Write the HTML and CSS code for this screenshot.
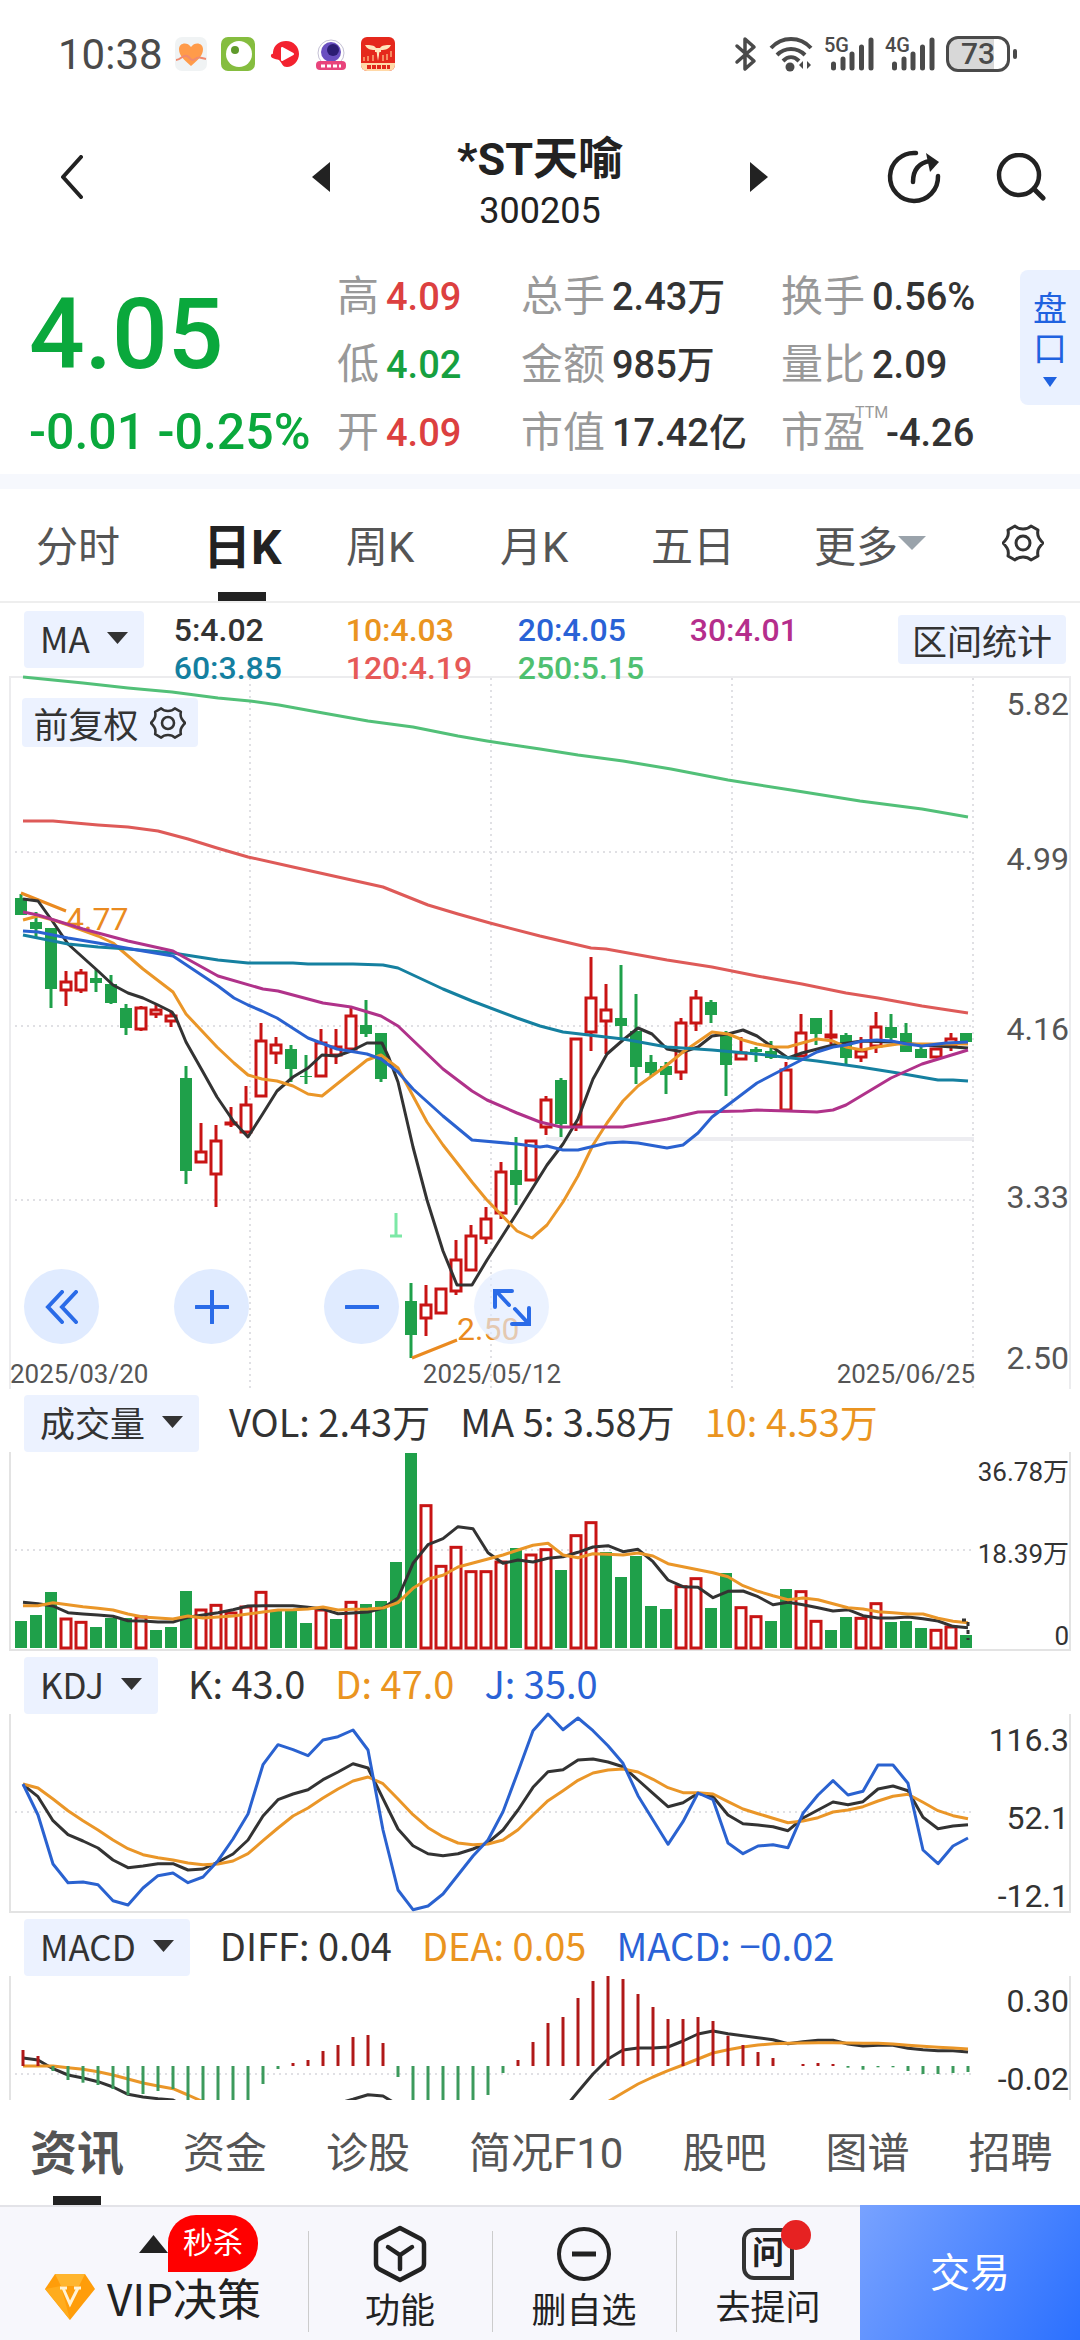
FILE: index.html
```html
<!DOCTYPE html>
<html lang="zh-CN">
<head>
<meta charset="utf-8">
<meta name="viewport" content="width=device-width, initial-scale=1">
<title>*ST天喻 300205</title>
<link rel="stylesheet" href="styles.css">
</head>
<body>
<svg class="defs" aria-hidden="true">
  <symbol id="gear" viewBox="0 0 42 42">
    <path d="M13 4q3 3 8 3t8-3l7 4q-1 5 1 8t4 5q-2 2-4 5t-1 8l-7 4q-3-3-8-3t-8 3l-7-4q1-5-1-8t-4-5q2-2 4-5t1-8z" fill="none" stroke="currentColor" stroke-width="3" stroke-linejoin="round"/>
    <circle cx="21" cy="21" r="7" fill="none" stroke="currentColor" stroke-width="3"/>
  </symbol>
  <symbol id="bars" viewBox="0 0 44 34">
    <path d="M2.500 27v4M12 22v9M21 17v14M30.500 10v21M40 3v28" stroke="currentColor" stroke-width="5" stroke-linecap="round"/>
  </symbol>
</svg>

<div class="status">
  <time class="clock">10:38</time>
  <div class="notices">
    <svg width="32" height="34" viewBox="0 0 32 34"><rect width="32" height="34" rx="7" fill="#f0f3f4"/><path d="M16 29C8 22 4 18 4 12c0-6 8-8 12-2 4-6 12-4 12 2 0 6-4 10-12 17z" fill="#ff9b4a"/><path d="M1 23c5 0 7-6 11-4 4 2 4 6 8 3 4-3 5-1 11 0" fill="none" stroke="#f08a70" stroke-width="2"/></svg>
    <svg width="34" height="34" viewBox="0 0 34 34"><rect width="34" height="34" rx="7" fill="#85bd3f"/><circle cx="18" cy="17" r="13" fill="#fff"/><circle cx="14" cy="13" r="4" fill="#5f9a2b"/></svg>
    <svg width="32" height="28" viewBox="0 0 32 28"><path d="M4 12C5 5 10 1 17 1c8 0 13 6 13 13s-6 13-12 13c-5 0-4-3-8-7-4-1-9-2-8-5 1-2 2 0 2-3z" fill="#f3222f"/><path d="M13 8v12l11-6z" fill="#fff" stroke="#fff" stroke-width="2" stroke-linejoin="round"/></svg>
    <svg width="32" height="34" viewBox="0 0 32 34"><circle cx="16" cy="16" r="13" fill="#fff" stroke="#c4c0d4"/><circle cx="16" cy="15" r="10" fill="#6a50c0"/><circle cx="18" cy="13" r="6" fill="#2b1d73"/><rect x="1" y="24" width="30" height="9" rx="4" fill="#e8447c"/><path d="M6 29h20" stroke="#fff" stroke-width="3" stroke-dasharray="4 2"/></svg>
    <svg width="34" height="34" viewBox="0 0 34 34"><rect width="34" height="34" rx="6" fill="#e5281c"/><path d="M4 8c6 0 9 0 11 3h4c2-3 5-3 11-3-2 4-5 5-10 5v2c-1 0-2-1-2 3l-1 6-1-6c0-4-1-3-2-3v-2C9 13 6 12 4 8z" fill="#ffe6bd"/><path d="M3 20v4M7 19v5M12 18v6M22 18v6M26 17v6M30 14v6" stroke="#f58a60" stroke-width="2"/><path d="M0 26h34v2a6 6 0 0 1-6 6H6a6 6 0 0 1-6-6z" fill="#ffd9a8"/><path d="M6 30h23" stroke="#e0261b" stroke-width="4" stroke-dasharray="4 1"/></svg>
  </div>
  <div class="radios">
    <svg width="24" height="36" viewBox="0 0 24 36"><path d="M3 10l17 15-9 8V3l9 8L3 26" fill="none" stroke="currentColor" stroke-width="3.500" stroke-linejoin="round" stroke-linecap="round"/></svg>
    <svg width="46" height="36" viewBox="0 0 46 36"><path d="M3 12c11-12 29-12 40 0M9 19c8-8 20-8 28 0M15 25c5-5 11-5 16 0" fill="none" stroke="currentColor" stroke-width="4"/><circle cx="22" cy="31" r="4.500" fill="currentColor"/><path d="M35 25v8l-4-4zM39 25v8l4-4z" fill="currentColor"/></svg>
    <span class="signal"><b>5G</b><svg width="44" height="34"><use href="#bars"/></svg></span>
    <span class="signal"><b>4G</b><svg width="44" height="34"><use href="#bars"/></svg></span>
    <span class="battery">73</span>
  </div>
</div>

<header class="top">
  <button class="icon back" aria-label="返回"><svg width="24" height="44" viewBox="0 0 24 44"><path d="M21 2L3 22l18 20" fill="none" stroke="currentColor" stroke-width="4" stroke-linecap="round" stroke-linejoin="round"/></svg></button>
  <button class="icon" aria-label="上一只"><svg width="18" height="30" viewBox="0 0 18 30"><path d="M18 0v30L0 15z" fill="currentColor"/></svg></button>
  <div class="name"><h1>*ST天喻</h1><p>300205</p></div>
  <button class="icon" aria-label="下一只"><svg width="18" height="30" viewBox="0 0 18 30"><path d="M0 0v30l18-15z" fill="currentColor"/></svg></button>
  <div class="actions">
    <button class="icon" aria-label="分享"><svg width="56" height="56" viewBox="0 0 56 56"><path d="M30 4A24 24 0 1 0 52 27M27 33c0-11 5-19 17-21" fill="none" stroke="currentColor" stroke-width="4.500" stroke-linecap="round"/><path d="M40 4l13 9-9 10z" fill="currentColor"/></svg></button>
    <button class="icon" aria-label="搜索"><svg width="50" height="48" viewBox="0 0 50 48"><circle cx="23" cy="22" r="20" fill="none" stroke="currentColor" stroke-width="4.500"/><path d="M38 36l9 9" stroke="currentColor" stroke-width="5" stroke-linecap="round"/></svg></button>
  </div>
</header>

<section class="quote">
  <div class="price"><strong>4.05</strong><span>-0.01 -0.25%</span></div>
  <dl class="stats">
    <div><dt>高</dt><dd class="up">4.09</dd></div>
    <div><dt>总手</dt><dd>2.43万</dd></div>
    <div><dt>换手</dt><dd>0.56%</dd></div>
    <div><dt>低</dt><dd class="down">4.02</dd></div>
    <div><dt>金额</dt><dd>985万</dd></div>
    <div><dt>量比</dt><dd>2.09</dd></div>
    <div><dt>开</dt><dd class="up">4.09</dd></div>
    <div><dt>市值</dt><dd>17.42亿</dd></div>
    <div><dt class="ttm">市盈<sup>TTM</sup></dt><dd>-4.26</dd></div>
  </dl>
  <button class="depth">盘<br>口<svg width="14" height="10" viewBox="0 0 14 10"><path d="M0 0h14L7 10z" fill="currentColor"/></svg></button>
</section>

<nav class="periods">
  <button>分时</button>
  <button class="on">日K</button>
  <button>周K</button>
  <button>月K</button>
  <button>五日</button>
  <button>更多<svg width="28" height="14" viewBox="0 0 28 14"><path d="M0 0h28L14 14z" fill="#9aa3ab"/></svg></button>
  <button class="gear" aria-label="设置"><svg width="42" height="42"><use href="#gear"/></svg></button>
</nav>

<section class="kline">
  <div class="malegend">
    <button class="chip">MA<svg class="caret" viewBox="0 0 21 12"><path d="M0 0h21L10.500 12z"/></svg></button>
    <div class="mas">
      <span>5:4.02</span><span class="c10">10:4.03</span><span class="c20">20:4.05</span><span class="c30">30:4.01</span>
      <span class="c60">60:3.85</span><span class="c120">120:4.19</span><span class="c250">250:5.15</span>
    </div>
    <button class="chip range">区间统计</button>
  </div>
  <div class="plot">
    <svg id="kline" class="chart" viewBox="0 676 1080 713"></svg>
    <button class="chip adjust">前复权<svg width="36" height="36"><use href="#gear"/></svg></button>
    <div class="tools">
      <button aria-label="更早"><svg width="34" height="34" viewBox="0 0 34 34"><path d="M17 2L3 17l14 15M31 2L17 17l14 15"/></svg></button>
      <button aria-label="放大"><svg width="34" height="34" viewBox="0 0 34 34"><path d="M1 17h32M17 1v32"/></svg></button>
      <button aria-label="缩小"><svg width="34" height="34" viewBox="0 0 34 34"><path d="M1 17h32"/></svg></button>
      <button class="full" aria-label="全屏"><svg width="38" height="38" viewBox="0 0 38 38"><path d="M2 19V3h17M3 3l13 14M22 21l13 14M19 36h17V20"/></svg></button>
    </div>
  </div>
</section>

<section class="panel">
  <div class="legend">
    <button class="chip">成交量<svg class="caret" viewBox="0 0 21 12"><path d="M0 0h21L10.500 12z"/></svg></button>
    <span>VOL: 2.43万</span><span>MA 5: 3.58万</span><span class="c10">10: 4.53万</span>
  </div>
  <svg id="volume" class="chart" viewBox="0 1452 1080 199"></svg>
</section>

<section class="panel">
  <div class="legend">
    <button class="chip">KDJ<svg class="caret" viewBox="0 0 21 12"><path d="M0 0h21L10.500 12z"/></svg></button>
    <span>K: 43.0</span><span class="c10">D: 47.0</span><span class="c20">J: 35.0</span>
  </div>
  <svg id="kdj" class="chart" viewBox="0 1714 1080 199"></svg>
</section>

<section class="panel">
  <div class="legend">
    <button class="chip">MACD<svg class="caret" viewBox="0 0 21 12"><path d="M0 0h21L10.500 12z"/></svg></button>
    <span>DIFF: 0.04</span><span class="c10">DEA: 0.05</span><span class="c20">MACD: −0.02</span>
  </div>
  <svg id="macd" class="chart clipped" viewBox="0 1976 1080 124"></svg>
</section>

<nav class="info">
  <button class="on">资讯</button><button>资金</button><button>诊股</button><button>简况F10</button><button>股吧</button><button>图谱</button><button>招聘</button>
</nav>

<footer class="bar">
  <button class="vip">
    <span class="promo"><svg width="29" height="18" viewBox="0 0 29 18"><path d="M14.500 0L29 18H0z" fill="#222"/></svg><em>秒杀</em></span>
    <span class="viprow"><svg width="52" height="48" viewBox="0 0 52 48"><path d="M11 1h30l10 15-25 31L1 16z" fill="#ff9d0a"/><path d="M11 1h30l-6 12H17z" fill="#ffb52e"/><path d="M1 16l16-3 9 34z" fill="#ffac1d"/><path d="M16 15h7M30 15h7M19 15l7 16 8-16" fill="none" stroke="#fff3d6" stroke-width="3"/></svg>VIP决策</span>
  </button>
  <button class="item"><svg width="54" height="58" viewBox="0 0 54 58"><path d="M27 3l21 11q3 2 3 5v20q0 3-3 5L27 55 6 44q-3-2-3-5V19q0-3 3-5z" fill="none" stroke="currentColor" stroke-width="4.500" stroke-linejoin="round"/><path d="M15 22l12 8 12-8M27 30v14" fill="none" stroke="currentColor" stroke-width="4.500" stroke-linecap="round"/></svg>功能</button>
  <button class="item"><svg width="54" height="58" viewBox="0 0 54 58"><circle cx="27" cy="29" r="25" fill="none" stroke="currentColor" stroke-width="4"/><path d="M15 29h24" stroke="currentColor" stroke-width="5"/></svg>删自选</button>
  <button class="item"><span class="ask">问</span>去提问</button>
  <button class="trade">交易</button>
</footer>
<script src="charts.js"></script>
</body>
</html>
```
FILE: styles.css
```css
* { box-sizing: border-box; }
body { margin: 0; background: #fff; color: #333; font-family: Roboto, "Noto Sans CJK SC", sans-serif; }
button { border: 0; padding: 0; background: none; font: inherit; color: inherit; display: flex; align-items: center; justify-content: center; }
h1, p, dl, dd { margin: 0; }
.defs { position: absolute; width: 0; height: 0; }
svg { flex: none; }

.status { display: flex; align-items: center; height: 108px; padding: 0 60px 0 58px; color: #4a4a4a; }
.clock { font-size: 42px; }
.notices { display: flex; align-items: center; gap: 14px; margin-left: 12px; }
.radios { display: flex; align-items: center; gap: 10px; margin-left: auto; }
.signal { display: flex; position: relative; padding-left: 7px; }
.signal b { position: absolute; left: 0; top: -2px; font-size: 20px; line-height: 20px; font-weight: 500; }
.battery { position: relative; width: 64px; height: 36px; border: 3px solid #4a4a4a; border-radius: 12px; background: linear-gradient(90deg, #d8d8d8 78%, #fff 78%); font-size: 30px; line-height: 30px; font-weight: 500; text-align: center; margin-right: 10px; }
.battery::after { content: ""; position: absolute; right: -10px; top: 10px; width: 4px; height: 10px; border-radius: 2px; background: #4a4a4a; }

.top { display: grid; grid-template-columns: 1fr 18px 420px 18px 1fr; align-items: center; height: 138px; color: #222; }
.back { justify-self: start; margin-left: 60px; }
.name { text-align: center; padding-top: 16px; }
.name h1 { font-size: 45px; line-height: 52px; font-weight: 700; }
.name p { font-size: 36px; line-height: 50px; }
.actions { display: flex; align-items: center; justify-content: flex-end; gap: 54px; padding-right: 34px; }

.quote { display: grid; grid-template-columns: 308px 1fr 60px; height: 228px; padding: 17px 0 0 29px; align-items: start; }
.price { color: #0aa83c; font-weight: 500; padding-top: 18px; }
.price strong { display: block; font-size: 98px; line-height: 108px; font-weight: 500; }
.price span { display: block; font-size: 50px; line-height: 60px; padding-top: 13px; white-space: nowrap; }
.stats { display: grid; grid-template-columns: 184px 260px 1fr; grid-auto-rows: 68px; white-space: nowrap; }
.stats div { display: flex; align-items: center; gap: 7px; }
.stats dt { font-size: 42px; line-height: 50px; color: #999; }
.stats dd { font-size: 38px; line-height: 50px; font-weight: 500; }
.stats .up { color: #dc4040; }
.stats .down { color: #16a040; }
.ttm { position: relative; margin-right: 14px; }
.ttm sup { position: absolute; left: 74px; top: -3px; font-size: 16px; line-height: 16px; }
.depth { flex-direction: column; height: 135px; margin-top: 7px; border-radius: 8px 0 0 8px; background: #eaf1ff; color: #1f62e0; font-size: 34px; line-height: 40px; }
.depth svg { margin-top: 8px; }

.periods { display: grid; grid-template-columns: 167fr 143fr 154fr 151fr 163fr 188fr 42fr; justify-items: start; height: 129px; padding: 0 36px; border-top: 15px solid #f6f8fd; border-bottom: 2px solid #eee; font-size: 42px; color: #555; white-space: nowrap; }
.periods button { height: 112px; padding-bottom: 4px; }
.on { position: relative; font-weight: 700; }
.periods .on { font-size: 48px; color: #222; }
.on::after { content: ""; position: absolute; bottom: 0; left: calc(50% - 24px); width: 48px; height: 9px; background: #222; }
.gear { color: #333; }

.chip { background: #ecf2ff; border-radius: 4px; height: 57px; padding: 0 16px 3px; gap: 17px; font-family: "Noto Sans CJK SC", sans-serif; font-size: 35px; line-height: 48px; color: #333; white-space: nowrap; }
.caret { width: 21px; height: 12px; fill: #333; }
.c10 { color: #ea9420; }
.c20 { color: #2a62d6; }
.c30 { color: #b52e8c; }
.c60 { color: #147fa0; }
.c120 { color: #e65a58; }
.c250 { color: #4fc070; }
.malegend { position: relative; z-index: 1; display: flex; align-items: flex-start; height: 73px; padding: 8px 14px 0 24px; }
.mas { flex: 1; display: grid; grid-template-columns: repeat(4, 172px); font-size: 32px; line-height: 38px; font-weight: 500; padding: 0 0 0 30px; white-space: nowrap; }
.range { height: 49px; margin-top: 4px; padding: 0 14px; }
.plot { position: relative; }
.chart { display: block; width: 100%; height: auto; overflow: visible; font-family: Roboto, "Noto Sans CJK SC", sans-serif; }
.clipped { overflow: hidden; }
.adjust { position: absolute; left: 2%; top: 22px; height: 49px; padding: 0 12px; gap: 11px; }
.tools { position: absolute; left: 24px; bottom: 45px; display: flex; gap: 75px; }
.tools button { width: 75px; height: 75px; border-radius: 50%; background: #e0ebff; }
.tools .full { background: rgba(224, 235, 255, .65); }
.tools path { fill: none; stroke: #2a6be8; stroke-width: 4; stroke-linecap: round; }

.panel { padding-top: 6px; }
.legend { display: flex; align-items: center; gap: 30px; padding-left: 24px; height: 57px; font-family: "Noto Sans CJK SC", sans-serif; font-size: 38px; line-height: 48px; white-space: nowrap; }
.legend span { padding-bottom: 5px; }

.info { display: flex; gap: 59px; height: 105px; padding: 0 30px; font-size: 42px; color: #555; white-space: nowrap; overflow: hidden; }
.info button { padding-bottom: 6px; }
.info .on { font-size: 47px; }

.bar { display: grid; grid-template-columns: 308px 184px 184px 184px 1fr; height: 135px; border-top: 2px solid #e3e3e8; background: #f7f7fc; color: #222; }
.vip { flex-direction: column; align-items: stretch; padding: 0 0 10px 44px; }
.promo { display: flex; align-items: center; padding-left: 95px; }
.promo em { width: 90px; height: 57px; border-radius: 28px 28px 28px 0; background: #f00; color: #fff; font-style: normal; font-size: 30px; line-height: 56px; text-align: center; }
.viprow { display: flex; align-items: center; gap: 11px; font-family: "Noto Sans CJK SC", sans-serif; font-size: 44px; line-height: 50px; white-space: nowrap; }
.item { position: relative; flex-direction: column; padding-top: 12px; font-size: 35px; line-height: 44px; }
.item svg, .ask { margin-bottom: 7px; }
.item::before { content: ""; position: absolute; left: 0; top: 24px; bottom: 8px; width: 1px; background: #ccc; }
.ask { position: relative; width: 52px; height: 52px; border: 4px solid #333; border-radius: 12px 12px 0 12px; font-size: 32px; line-height: 43px; font-weight: 700; }
.ask::after { content: ""; position: absolute; right: -21px; top: -12px; width: 30px; height: 30px; border-radius: 50%; background: #e62222; }
.trade { margin-top: -2px; padding-bottom: 5px; background: linear-gradient(120deg, #78a2ff, #2b70ff); color: #fff; font-size: 40px; }
```
FILE: charts.js
```js
const GREEN = '#1fa04a', RED = '#c81414';
const BLACK = '#333', ORANGE = '#ea9628', BLUE = '#2a62d0';
const mid = i => 21 + 15 * i;

const line = (pts, color) =>
  `<polyline points="${pts}" fill="none" stroke="${color}" stroke-width="3" stroke-linejoin="round"/>`;
const dots = (d) => `<path d="${d}" stroke="#e0e0e4" stroke-width="2" stroke-dasharray="2 4"/>`;
const label = (x, y, t, size, color, anchor = 'end') =>
  `<text x="${x}" y="${y}" font-size="${size}" fill="${color}" text-anchor="${anchor}">${t}</text>`;
const frame = (top, bottom) =>
  `<path d="M10 ${top}V${bottom}H1070V${top}" fill="none" stroke="#e3e3e3" stroke-width="2"/>`;
const body = (i, up, top, bottom) => up
  ? `<rect x="${mid(i) - 5}" y="${top + 1}" width="10" height="${Math.max(1, bottom - top - 2)}" fill="#fff" stroke="${RED}" stroke-width="3"/>`
  : `<rect x="${mid(i) - 6}" y="${top}" width="12" height="${Math.max(1, bottom - top)}" fill="${GREEN}"/>`;
// y readings are stored as thirds of a pixel below the panel origin
const series = (origin, ys) => ys.map((y, i) => `${23 + 15 * i},${(origin + y / 3).toFixed(1)}`).join(' ');

// up?, high, body top, body bottom, low
const candles = [
[0,894,898,915,915],[0,912,922,929,937],[0,928,928,989,1008],[1,971,981,991,1006],[1,969,972,991,993],[0,970,978,983,992],[0,975,984,1003,1004],[0,1004,1008,1028,1035],
[1,1006,1007,1030,1031],[1,1005,1009,1015,1018],[1,1011,1015,1022,1027],[0,1066,1078,1171,1184],[1,1123,1151,1163,1163],[1,1125,1140,1175,1207],[1,1107,1122,1125,1127],[1,1086,1104,1133,1135],
[1,1023,1040,1097,1097],[1,1037,1044,1054,1064],[0,1045,1049,1069,1082],[0,1055,1076,1077,1084],[1,1029,1042,1077,1077],[1,1029,1046,1056,1064],[1,1008,1015,1050,1050],[0,1000,1025,1034,1037],
[0,1033,1033,1079,1082],null,[0,1283,1301,1335,1358],[1,1285,1304,1319,1336],[1,1288,1288,1314,1314],[1,1240,1259,1292,1295],[1,1225,1235,1271,1271],[1,1207,1218,1239,1244],
[1,1162,1171,1214,1219],[0,1137,1170,1185,1205],[1,1140,1140,1181,1181],[1,1096,1099,1128,1135],[0,1078,1080,1124,1137],[1,1038,1038,1126,1131],[1,957,997,1033,1051],[1,984,1009,1022,1054],
[0,965,1018,1026,1039],[0,994,1031,1067,1084],[0,1055,1062,1073,1076],[0,1062,1066,1075,1094],[1,1018,1022,1073,1080],[1,990,997,1024,1031],[0,1000,1002,1015,1023],[0,1031,1033,1065,1096],
[1,1037,1052,1060,1060],[0,1047,1049,1052,1062],[0,1041,1051,1058,1059],[1,1062,1069,1111,1111],[1,1014,1032,1057,1057],[0,1018,1018,1034,1045],[1,1010,1034,1038,1044],[0,1033,1035,1058,1064],
[1,1037,1050,1058,1062],[1,1012,1026,1047,1053],[0,1014,1027,1038,1040],[0,1023,1033,1052,1052],[0,1046,1049,1058,1058],[1,1048,1048,1058,1058],[1,1033,1038,1047,1051],[0,1033,1033,1042,1042]];

const ma = {
  '#52c078': '23,677 53,680 83,683 128,688 172,692 218,698 250,701 279,705 323,713 368,721 413,727 458,736 487,741 540,749 578,755 623,761 671,769 728,780 791,790 860,801 922,809 968,817',
  '#de5a58': '23,821 53,821 98,825 128,827 158,831 188,839 217,848 248,857 293,867 338,877 383,887 428,905 458,914 490,923 540,936 591,948 606,949 667,960 712,967 757,976 802,984 846,993 878,998 922,1006 968,1013',
  '#333': '23,899 38,901 53,922 68,944 98,971 113,985 128,993 143,998 158,1005 172,1012 176,1018 186,1042 203,1072 217,1097 234,1122 248,1137 262,1115 277,1091 293,1077 308,1068 322,1055 337,1056 351,1051 367,1043 382,1043 389,1058 398,1082 413,1147 427,1200 443,1251 457,1285 472,1285 487,1260 503,1235 517,1213 537,1181 547,1165 563,1144 578,1119 593,1079 607,1054 623,1040 638,1028 652,1034 667,1049 683,1052 698,1047 712,1036 728,1034 743,1030 757,1036 788,1058 802,1053 833,1045 862,1041 891,1042 922,1045 953,1047 968,1048',
  '#ea9628': '23,920 38,916 53,920 68,925 98,936 113,943 143,969 173,992 186,1014 217,1047 234,1063 248,1075 262,1079 277,1081 293,1086 308,1094 322,1096 337,1084 367,1060 381,1055 398,1068 413,1096 427,1122 443,1145 472,1182 486,1199 517,1231 532,1238 547,1225 563,1202 578,1176 593,1145 607,1123 623,1101 638,1086 667,1065 683,1052 712,1032 728,1034 743,1040 757,1044 774,1047 788,1047 802,1043 817,1039 833,1041 846,1047 862,1050 877,1047 898,1044 922,1044 968,1044',
  '#1580a0': '23,935 68,944 98,947 128,949 173,953 218,960 248,963 293,963 308,964 353,964 383,965 398,968 443,989 472,1001 517,1018 540,1026 563,1032 623,1039 667,1047 712,1050 757,1054 817,1061 860,1067 898,1073 938,1080 953,1080 968,1081',
  '#b0328a': '23,912 38,915 83,929 128,941 173,951 218,976 263,989 278,991 323,1003 351,1007 381,1016 398,1026 443,1069 472,1091 487,1100 517,1113 540,1122 561,1127 623,1127 667,1119 698,1112 743,1111 757,1110 788,1111 817,1112 833,1110 846,1105 891,1078 922,1064 968,1050',
  '#2a62d0': '23,931 38,932 68,938 98,943 143,951 173,956 218,986 234,998 248,1005 262,1011 277,1018 308,1038 337,1049 367,1054 381,1059 398,1072 413,1089 443,1116 472,1140 517,1144 540,1147 547,1146 563,1150 578,1150 607,1143 623,1142 638,1143 667,1148 683,1145 698,1133 712,1117 757,1083 778,1072 817,1052 833,1047 846,1045 862,1041 877,1040 891,1041 907,1044 922,1046 946,1043 968,1042'
};

document.getElementById('kline').innerHTML =
  '<path d="M10 1389V677H1070V1389" fill="none" stroke="#ececee" stroke-width="2"/>' +
  '<path d="M546 1139H974" stroke="#ededf1" stroke-width="4"/>' +
  dots('M15 852H973M15 1026H973M15 1200H973M250 678V1389M491 678V1389M732 678V1389M973 678V1389') +
  candles.map((c, i) => c ? `<path d="M${mid(i)} ${c[1]}V${c[4]}" stroke="${c[0] ? RED : GREEN}" stroke-width="3"/>` + body(i, c[0], c[2], c[3])
    : '<path d="M396 1213V1236M390 1236H402" stroke="#7ce8a6" stroke-width="3"/>').join('') +
  label(66, 930, '4.77', 32, '#ea8a20', 'start') + label(457, 1340, '2.50', 32, '#ea8a20', 'start') +
  '<path d="M21 893L66 911M412 1358L457 1340" stroke="#ea8a20" stroke-width="3"/>' +
  Object.entries(ma).map(([c, p]) => line(p, c)).join('') +
  [['5.82', 715], ['4.99', 870], ['4.16', 1040], ['3.33', 1208], ['2.50', 1369]].map(a => label(1069, a[1], a[0], 32, '#555')).join('') +
  label(10, 1383, '2025/03/20', 26, '#555', 'start') + label(492, 1383, '2025/05/12', 26, '#555', 'middle') + label(975, 1383, '2025/06/25', 26, '#555');

// negative marks a rising day
const vol = [693,675,606,-687,-697,711,684,684,-681,720,711,603,-660,-646,-669,-651,-607,660,660,699,-660,687,-637,642,633,516,189,-347,-529,-472,-545,-545,-516,474,-495,-479,540,-437,-398,486,561,498,648,657,-590,-566,654,549,-653,-680,693,597,-605,-694,720,681,-685,-641,696,693,714,-721,-711,735];
const vol5 = [637,641,648,668,672,675,679,692,693,696,696,682,675,668,659,648,647,647,647,652,657,671,669,666,654,624,520,464,446,410,416,488,520,510,516,505,500,487,471,467,485,478,515,570,590,592,623,604,603,620,644,637,644,653,663,659,677,684,684,681,686,693,709,713];
const vol10 = [647,647,638,644,650,655,660,672,681,684,687,678,684,681,678,672,666,660,659,657,651,660,658,657,654,638,595,567,556,531,519,507,495,480,466,460,495,503,491,493,495,489,498,521,530,539,548,560,587,604,617,629,624,629,641,653,657,665,668,672,672,685,694,698];
document.getElementById('volume').innerHTML = frame(1452, 1650) + dots('M15 1550H973') +
  vol.map((v, i) => v < 0 ? body(i, 1, 1390 - v / 3 - 1, 1649) : body(i, 0, 1390 + v / 3, 1648)).join('') +
  line(series(1390, vol5), BLACK) + line(series(1390, vol10), ORANGE) +
  '<path d="M962 1620h6v20" fill="none" stroke="#333" stroke-width="3" stroke-dasharray="4 4"/>' +
  label(1069, 1481, '36.78万', 26, '#333') + label(1069, 1563, '18.39万', 26, '#333') + label(1069, 1645, '0', 26, '#333');

const k = [254,290,362,404,423,444,480,503,498,491,491,510,507,486,462,420,348,299,282,269,239,216,191,204,296,387,437,461,467,461,447,428,390,330,262,215,209,180,177,186,200,240,280,320,308,280,290,345,371,375,380,392,354,330,306,314,305,267,258,272,352,386,378,374];
const d = [252,264,297,332,362,390,420,446,464,473,480,489,494,492,483,461,422,384,348,324,294,267,243,231,251,297,344,383,410,429,434,432,420,389,345,302,272,241,219,210,207,216,238,263,278,278,282,305,327,341,355,368,363,353,336,330,320,303,289,283,307,332,347,356];
const j = [252,345,492,548,546,554,602,615,564,527,519,548,531,482,417,342,194,134,149,167,120,110,90,150,390,570,629,618,582,525,468,420,335,215,92,42,89,54,92,137,190,287,360,433,365,279,299,429,461,438,434,443,340,285,242,285,274,195,195,250,450,491,438,414];
document.getElementById('kdj').innerHTML = frame(1714, 1912) + dots('M15 1812H973') +
  line(series(1700, k), BLACK) + line(series(1700, d), ORANGE) + line(series(1700, j), BLUE) +
  label(1069, 1751, '116.3', 32, '#333') + label(1069, 1829, '52.1', 32, '#333') + label(1069, 1907, '-12.1', 32, '#333');

const hist = [1050,1068,1113,1140,1148,1155,1167,1185,1182,1173,1167,1210,1210,1210,1210,1210,1152,1107,1089,1080,1053,1035,1011,1005,1029,1131,1210,1210,1210,1210,1210,1185,1119,1080,1026,969,951,894,843,828,837,882,921,957,957,951,963,1007,1035,1056,1074,1098,1092,1089,1092,1103,1109,1102,1102,1113,1122,1122,1119,1116];
const diff = [1074,1080,1106,1125,1134,1145,1161,1183,1191,1196,1200,1225,1260,1300,1310,1310,1300,1280,1260,1250,1230,1210,1198,1184,1188,1215,1290,1350,1380,1390,1390,1380,1360,1330,1300,1270,1230,1175,1122,1077,1050,1044,1044,1041,1023,1002,993,1001,1007,1013,1019,1031,1025,1021,1021,1032,1038,1036,1036,1045,1049,1052,1052,1056];
const dea = [1098,1098,1098,1103,1108,1115,1125,1137,1149,1158,1166,1185,1205,1230,1250,1270,1280,1280,1280,1280,1280,1280,1280,1280,1280,1280,1280,1280,1280,1280,1280,1280,1280,1280,1280,1280,1270,1250,1230,1205,1178,1152,1131,1112,1095,1077,1059,1049,1041,1035,1031,1030,1029,1028,1028,1029,1030,1030,1032,1036,1039,1042,1044,1047];
document.getElementById('macd').innerHTML = '<path d="M10 1976V2100M1070 1976V2100" stroke="#e3e3e3" stroke-width="2"/>' + dots('M15 2074H973') +
  line(series(1700, diff), BLACK) + line(series(1700, dea), ORANGE) +
  hist.map((v, i) => `<path d="M${23 + 15 * i} 2066V${(1700 + v / 3).toFixed(1)}" stroke="${v < 1098 ? '#b01818' : '#3c9a5c'}" stroke-width="3"/>`).join('') +
  label(1069, 2012, '0.30', 32, '#333') + label(1069, 2090, '-0.02', 32, '#333');
```
